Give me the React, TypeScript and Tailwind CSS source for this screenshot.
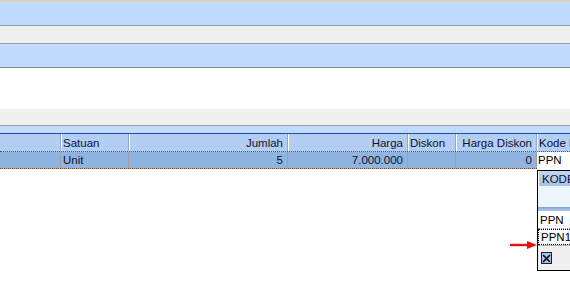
import React from 'react';

const cols = [
  { w: 'w-[61px]', label: '', value: '', align: 'left' },
  { w: 'w-[68px]', label: 'Satuan', value: 'Unit', align: 'left' },
  { w: 'w-[159px]', label: 'Jumlah', value: '5', align: 'right' },
  { w: 'w-[120px]', label: 'Harga', value: '7.000.000', align: 'right' },
  { w: 'w-[48px]', label: 'Diskon', value: '', align: 'left' },
  { w: 'w-[81px]', label: 'Harga Diskon', value: '0', align: 'right' },
];

const App: React.FC = () => {
  return (
    <div
      className="relative w-[570px] h-[289px] overflow-hidden bg-white text-[11.5px] leading-none text-[#101030]"
      style={{ fontFamily: '"Liberation Sans", Arial, sans-serif' }}
    >
      {/* top panels */}
      <div className="h-px bg-[#fcc98e]" />
      <div className="h-[25px] bg-[#bfdbfe] border-b border-[#9c9c9c]" />
      <div className="h-[18px] bg-[#f0f0f0] border-b border-[#9c9c9c]" />
      <div className="h-[24px] bg-[#bfdbfe] border-b border-[#8c8c8c]" />
      <div className="h-[41px] bg-white" />
      <div className="h-[17px] bg-[#f0f0f0] border-b border-[#a0a0a0]" />
      <div className="h-[8px] bg-[#c0dcff] border-b border-[#1f4c9e]" />

      {/* grid header */}
      <div className="flex h-[18px] bg-[#b2cef2] border-b border-dotted border-[#7a4a1e]">
        {cols.map((c, i) => (
          <div
            key={i}
            className={`${c.w} shrink-0 flex items-center pt-[2px] border-r border-[#8fa8cc] ${i > 0 ? 'border-l border-l-white' : ''} ${c.align === 'right' ? 'justify-end pr-[4px]' : 'pl-[1px]'}`}
          >
            {c.label}
          </div>
        ))}
        <div className="flex-1 flex items-center pt-[2px] pl-[1px] border-l border-l-white whitespace-nowrap">Kode P</div>
      </div>

      {/* selected row */}
      <div className="flex h-[17px]">
        <div className="flex bg-[#8fb4e0] border-b border-dotted border-[#7a4a1e]">
          {cols.map((c, i) => (
            <div
              key={i}
              className={`${c.w} shrink-0 flex items-center pt-[1px] border-r border-[#a0a0a0] ${c.align === 'right' ? 'justify-end pr-[4px]' : 'pl-[2px]'}`}
            >
              {c.value}
            </div>
          ))}
        </div>
        <div className="flex-1 flex items-center pt-[1px] pl-[1px] bg-white text-black">PPN</div>
      </div>

      {/* lookup dropdown */}
      <div className="absolute left-[537px] top-[170px] w-[60px] h-[101px] border border-black bg-white flex flex-col text-black">
        <div className="h-[15px] shrink-0 flex items-center pt-[2px] pl-[3px] bg-gradient-to-b from-[#c1d6f0] to-[#a9c3e6] border-l border-l-white text-[#101030]">
          KODE
        </div>
        <div className="h-[21px] shrink-0 bg-[#eef6fd]" />
        <div className="h-[4px] shrink-0 bg-gradient-to-b from-[#7fa3d8] to-[#b0c9ec]" />
        <div className="h-[18px] shrink-0 flex items-center pt-[3px] pl-[2px] bg-white border-b border-dotted border-[#909090]">PPN</div>
        <div className="h-[16px] shrink-0 flex items-center pt-[1px] pl-[2px] bg-[#f6faff] border border-dotted border-black">PPN11</div>
        <div className="flex-1 bg-[#f0f0f0] border-t border-[#b0b0b0] flex items-center pl-[3px]">
          <div className="w-[11px] h-[12px] bg-[#a8c4f0] border border-[#202020] flex items-center justify-center">
            <svg width="9" height="9" viewBox="0 0 9 9">
              <path d="M1 1 L8 8 M8 1 L1 8" stroke="#000" strokeWidth="1.6" />
            </svg>
          </div>
        </div>
      </div>

      {/* red pointer arrow */}
      <svg className="absolute left-[509px] top-[240px]" width="29" height="10" viewBox="0 0 29 10">
        <path d="M1 5 L20 5" stroke="#e81010" strokeWidth="2.4" />
        <path d="M18 1 L28 5 L18 9 Z" fill="#e81010" />
      </svg>
    </div>
  );
};

export default App;
